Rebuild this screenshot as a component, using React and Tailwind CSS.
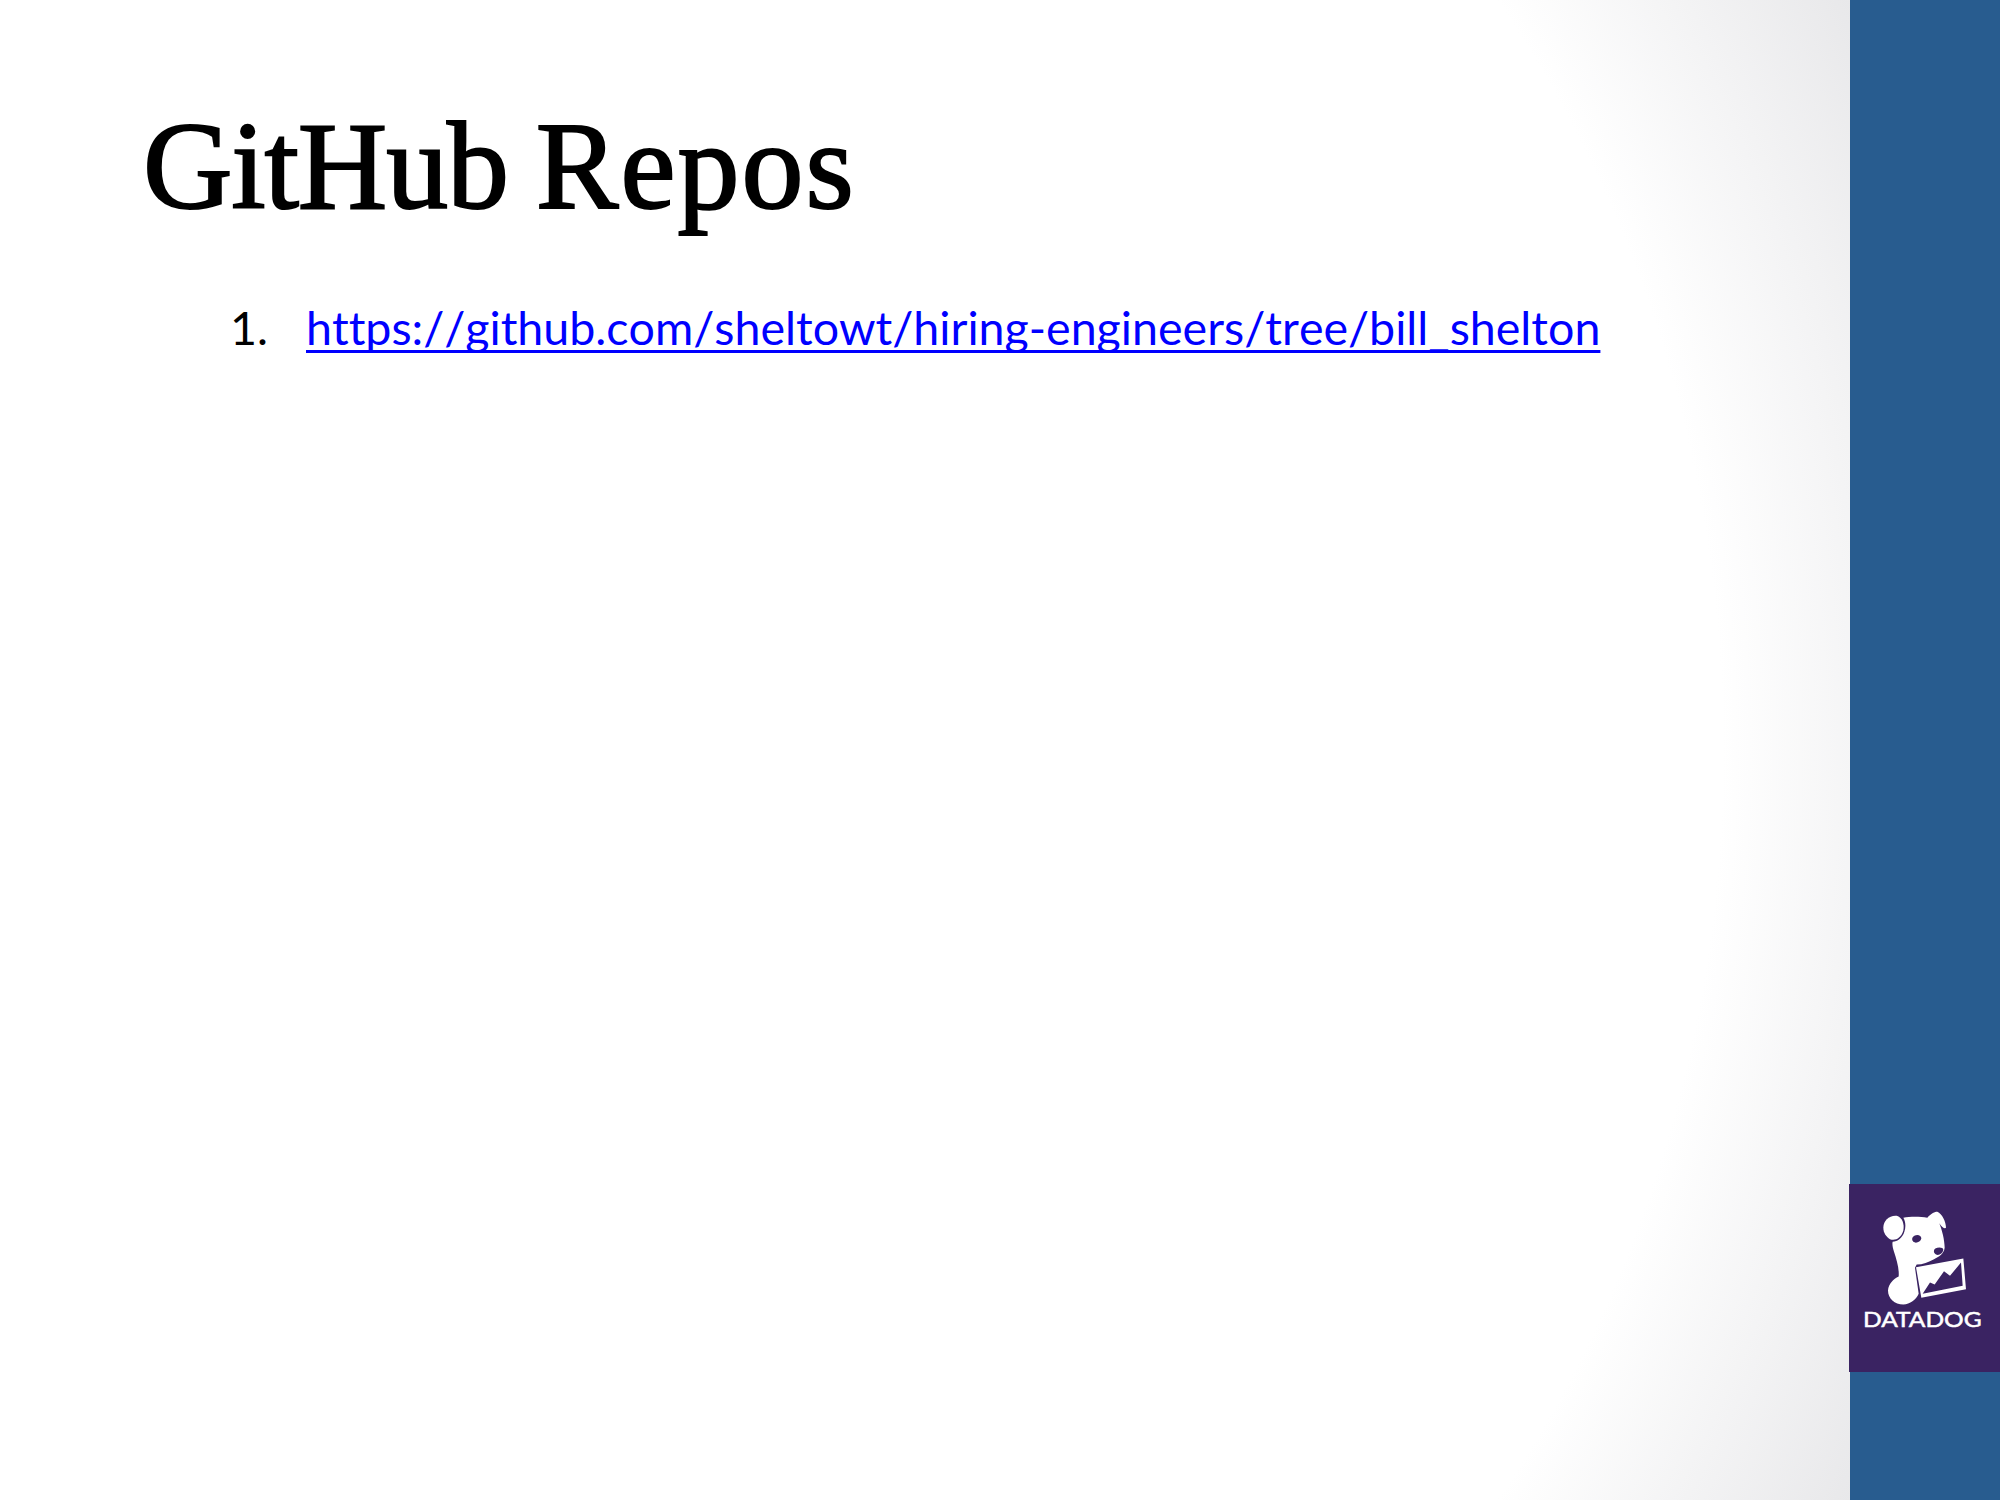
const Logo = () => (
  <svg viewBox="27 42 453 563" className="block w-full h-full">
    <g transform="translate(120 105)">
      <path fill="#fff" d="M10 68 C10 46 28 30 50 32 C66 36 74 56 70 76 C64 98 46 108 30 102 C18 96 10 82 10 68 Z" />
      <path fill="#fff" fillRule="evenodd" d="M70 38 C90 34 120 34 142 38 C150 28 162 20 172 20 C186 26 198 50 198 68 C194 72 186 66 178 54 C186 74 194 104 194 128 C192 146 176 156 162 162 C146 170 128 178 110 178 L105 188 L116 266 C108 284 90 298 70 298 C44 298 24 280 24 256 C26 236 40 222 56 214 C58 190 50 165 42 140 C38 128 36 116 38 110 C52 110 68 98 73 80 C78 66 77 50 70 38 Z M103 92 C112 86 124 90 124 100 C122 110 108 116 100 110 C94 104 96 96 103 92 Z M166 130 C174 126 190 126 190 134 C188 146 176 152 168 148 C160 144 160 134 166 130 Z" />
      <path fill="#fff" fillRule="evenodd" d="M108 186 L250 160 L258 252 L124 278 Z M128 266 L150 232 L164 238 L192 198 L210 212 L243 172 L248 242 Z" />
    </g>
    <text x="247" y="472" textAnchor="middle" fill="#fff" stroke="#fff" strokeWidth="1.5" fontFamily="Lato, sans-serif" fontSize="66" textLength="356" lengthAdjust="spacingAndGlyphs">DATADOG</text>
  </svg>
);

export default function App() {
  return (
    <div className="w-[2000px] h-[1500px] flex overflow-hidden bg-[#285c8f]">
      <main className="w-[1850px] h-full pl-[143px] pt-[92px] bg-[radial-gradient(ellipse_1421px_1579px_at_600px_750px,#ffffff_0%,#ffffff_79%,#e8e8ea_100%)]">
        <h1 className="text-[124px] leading-[150px] text-black font-['Liberation_Serif',serif] [-webkit-text-stroke:2px_black] [word-spacing:-3px]">
          <span className="tracking-[-1.2px]">GitHub</span> <span className="tracking-[2px]">Repos</span>
        </h1>
        <ol className="mt-[57px] ml-[87px] flex text-[46.55px] leading-[56px] font-['Lato',sans-serif] [font-variant-ligatures:none] [font-kerning:none]">
          <li className="flex">
            <span className="w-[76px] text-black">1.</span>
            <a href="#" className="text-[#0000ff] underline decoration-[3px] underline-offset-[5px] [text-decoration-skip-ink:none]">https://github.com/sheltowt/hiring-engineers/tree/bill_shelton</a>
          </li>
        </ol>
      </main>
      <aside className="w-[150px] h-full flex flex-col pt-[1184px]">
        <div className="w-[151px] h-[188px] -ml-px bg-[#3a2362]">
          <Logo />
        </div>
      </aside>
    </div>
  );
}
